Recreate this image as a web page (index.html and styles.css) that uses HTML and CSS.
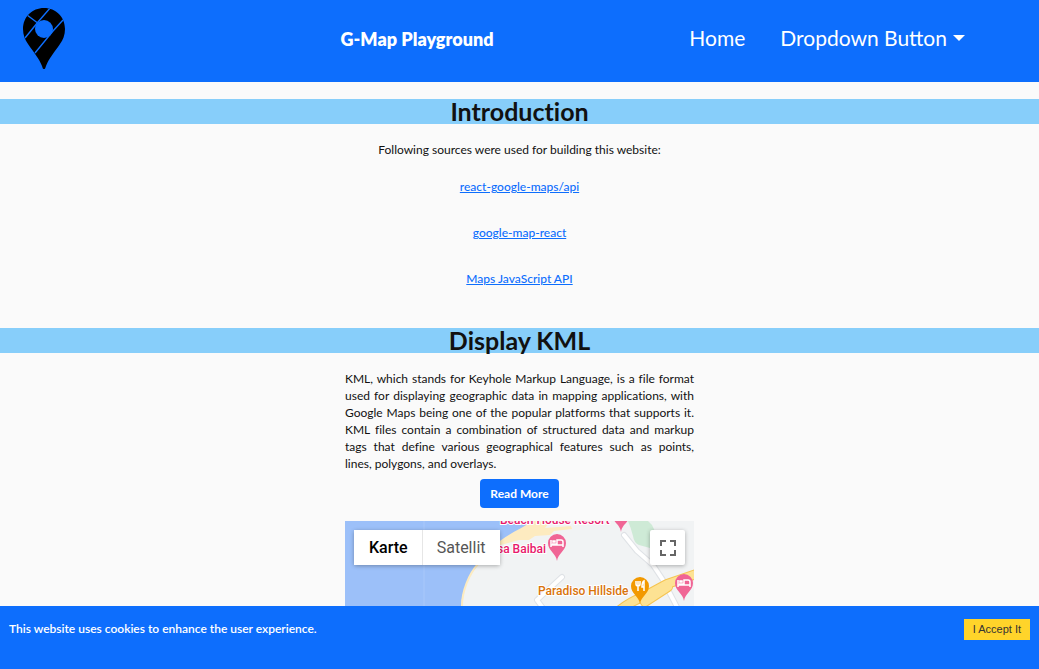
FILE: index.html
```html
<!DOCTYPE html>
<html lang="en">
<head>
<meta charset="utf-8">
<meta name="viewport" content="width=device-width, initial-scale=1">
<title>G-Map Playground</title>
<link rel="stylesheet" href="styles.css">
</head>
<body>
<header class="header">
  <a class="logo" href="#" aria-label="G-Map Playground">
    <svg width="44" height="63" viewBox="0 0 44 63" aria-hidden="true">
      <defs><clipPath id="pin"><path d="M22 1C10 1 1 10 1 22c0 6 2 11 5 15 6 9 11 14 14 22 1 3 1 3 2 3s1 0 2-3c3-8 8-13 14-22 3-4 5-9 5-15C43 10 34 1 22 1Z"/></clipPath></defs>
      <g clip-path="url(#pin)">
        <path d="M0 0H44V63H0Z"/>
        <path class="logo-line" d="M29 0 16 15 3 31M5 8 17 17M41 13 31 24 13 46"/>
        <circle class="logo-hole" cx="22" cy="22" r="9"/>
      </g>
    </svg>
  </a>
  <h1 class="title">G-Map Playground</h1>
  <nav class="nav">
    <a class="nav-item" href="#">Home</a>
    <button class="nav-item nav-toggle" type="button" aria-haspopup="true">Dropdown Button<span class="caret"></span></button>
  </nav>
</header>
<main class="main">
  <section>
    <h2 class="heading">Introduction</h2>
    <div class="sources">
      <p class="text">Following sources were used for building this website:</p>
      <ul class="links">
        <li><a href="#">react-google-maps/api</a></li>
        <li><a href="#">google-map-react</a></li>
        <li><a href="#">Maps JavaScript API</a></li>
      </ul>
    </div>
  </section>
  <section>
    <h2 class="heading">Display KML</h2>
    <div class="article">
      <p class="text justified">KML, which stands for Keyhole Markup Language, is a file format used for displaying geographic data in mapping applications, with Google Maps being one of the popular platforms that supports it. KML files contain a combination of structured data and markup tags that define various geographical features such as points, lines,&nbsp;polygons, and overlays.</p>
      <button class="read-more" type="button">Read More</button>
      <div class="map">
        <svg class="map-canvas" viewBox="0 0 349 200" preserveAspectRatio="xMidYMin slice" role="img" aria-label="Map">
          <defs>
            <path id="marker" d="M0 17C-1 9-9 7-9-1a9 9 0 0 1 18 0C9 7 1 9 0 17Z"/>
            <path id="bed" d="M-6-4V3M-6 1H6V3M6 1V-2Q6-4 4-4H0V0H-5M-4-3h2v1h-2z"/>
          </defs>
          <path class="land" d="M116 200V85C117 70 124 51 139 38 150 28 160 17 178 13 192 9 202 5 206 0H349V200Z"/>
          <path class="coast" d="M117 85C117 70 124 53 133 43"/>
          <path class="sand" d="M148 26C160 14 174 9 188 0H206L200 7 226 5 227 8 209 10 205 14 190 15 184 19 174 19Z"/>
          <path class="park" d="M283 0Q286 7 288 15 289 22 294 24L305 27H318L307 4 303 0Z"/>
          <path class="road-edge" d="M279 14 292 30 308 44 318 59 334 90M217 56 192 79 200 90"/>
          <path class="road" d="M279 14 292 30 308 44 318 59 334 90M217 56 192 79 200 90"/>
          <path class="highway-edge" d="M270 93Q284 81 298 76L322 63 354 52M300 81 323 66"/>
          <path class="highway" d="M270 93Q284 81 298 76L322 63 354 52M300 81 323 66"/>
          <path class="tile-line" d="M79 0V100"/>
          <text class="place hotel" x="155" y="3">Beach House Resort</text>
          <text class="place hotel" x="201" y="32" text-anchor="end">sa Baibai</text>
          <text class="place food" x="193" y="74">Paradiso Hillside</text>
          <g transform="translate(276 -6)"><use class="pin-hotel" href="#marker"/></g>
          <g transform="translate(212 23)"><use class="pin-hotel" href="#marker"/><use class="bed" href="#bed"/></g>
          <g transform="translate(339 63)"><use class="pin-hotel" href="#marker"/><use class="bed" href="#bed"/></g>
          <g transform="translate(295 66)"><use class="pin-food" href="#marker"/><path class="cutlery" d="M-4-6V-3Q-4-1-2-1T0-3V-6M-2-6V4M4 4V-6Q2-5 2 0H4"/></g>
        </svg>
        <div class="map-types">
          <button class="map-type active" type="button">Karte</button>
          <button class="map-type" type="button">Satellit</button>
        </div>
        <button class="fullscreen" type="button" aria-label="Fullscreen">
          <svg width="18" height="18" viewBox="0 0 18 18" aria-hidden="true"><path d="M2 7V2H7M11 2H16V7M16 11V16H11M7 16H2V11"/></svg>
        </button>
      </div>
    </div>
  </section>
</main>
<footer class="cookies">
  <p class="cookie-text">This website uses cookies to enhance the user experience.</p>
  <button class="accept" type="button">I Accept It</button>
</footer>
</body>
</html>
```
FILE: styles.css
```css
* { box-sizing: border-box; }

body {
  margin: 0;
  height: 100vh;
  display: flex;
  flex-direction: column;
  background: #fafafa;
  color: #111;
  font-family: Lato, sans-serif;
  font-size: 12px;
  font-variant-ligatures: none;
}

h1, h2, p, ul { margin: 0; }
button { font-family: inherit; cursor: pointer; }

.header {
  flex: none;
  display: grid;
  grid-template-columns: calc(34% - 2px) 1fr auto;
  align-items: center;
  height: 82px;
  padding: 0 74px 6px 22px;
  background: #0d6efd;
  color: #fff;
}
.logo { display: flex; }
.logo-line { fill: none; stroke: #0d6efd; stroke-width: 1.4; }
.logo-hole { fill: #0d6efd; }
.title { padding-top: 2px; font-size: 18px; line-height: 26px; font-weight: 800; white-space: nowrap; }
.nav { display: flex; justify-content: flex-end; align-items: center; gap: 35px; }
.nav-item {
  padding: 0;
  border: 0;
  background: none;
  color: #fff;
  font-size: 21px;
  line-height: 28px;
  text-decoration: none;
  white-space: nowrap;
}
.nav-toggle { display: flex; align-items: center; gap: 6px; }
.caret { border: 6px solid transparent; border-top-color: #fff; border-bottom: 0; }

.main { flex: 1; min-height: 0; overflow: hidden; padding-top: 17px; }
.heading {
  background: #87cefa;
  font-size: 25px;
  line-height: 25px;
  font-weight: 700;
  text-align: center;
}
.text { line-height: 17px; }
.sources { padding: 17px 0 41px; text-align: center; }
.links {
  display: flex;
  flex-direction: column;
  gap: 29px;
  padding: 20px 0 0;
  list-style: none;
  line-height: 17px;
}
.links a { color: #0d6efd; font-weight: 500; }

.article {
  display: flex;
  flex-direction: column;
  align-items: center;
  width: 349px;
  max-width: 100%;
  margin: 0 auto;
  padding-top: 17px;
}
.justified { text-align: justify; }
.read-more {
  margin: 7px 0 13px;
  padding: 6px 10px;
  border: 0;
  border-radius: 4px;
  background: #0d6efd;
  color: #fff;
  font-size: 12px;
  line-height: 17px;
  font-weight: 700;
}

.map { position: relative; width: 100%; height: 200px; background: #9cc0f9; font-family: Roboto, sans-serif; }
.map-canvas { display: block; width: 100%; height: 100%; }
.land { fill: #f1f3f4; }
.coast { fill: none; stroke: #fdebc0; stroke-width: 2; }
.sand { fill: #fdebc0; }
.park { fill: #ceead6; }
.road, .road-edge, .highway, .highway-edge { fill: none; stroke-linejoin: round; stroke-linecap: round; }
.road-edge { stroke: #dfe2e6; stroke-width: 6; }
.road { stroke: #fff; stroke-width: 4; }
.highway-edge { stroke: #f5c451; stroke-width: 10; }
.highway { stroke: #fde293; stroke-width: 8; }
.tile-line { stroke: #a9c8fa; }
.place { font-size: 12px; font-weight: 500; stroke: #fff; stroke-width: 2; paint-order: stroke; }
.hotel { fill: #e8196b; }
.food { fill: #d9730b; }
.pin-hotel { fill: #f06595; }
.pin-food { fill: #f29900; }
.bed, .cutlery { fill: none; stroke: #fff; stroke-width: 1.5; }

.map-types {
  position: absolute;
  top: 9px;
  left: 9px;
  display: flex;
  border-radius: 2px;
  box-shadow: 0 1px 4px rgba(0, 0, 0, .3);
}
.map-type {
  padding: 0 14px;
  border: 0;
  background: #fff;
  color: #565656;
  font-size: 16px;
  line-height: 35px;
}
.map-type + .map-type { border-left: 1px solid #e6e6e6; }
.map-type.active { padding-left: 15px; color: #000; font-weight: 500; }
.fullscreen {
  position: absolute;
  top: 9px;
  right: 9px;
  display: grid;
  place-items: center;
  width: 35px;
  height: 35px;
  padding: 0;
  border: 0;
  border-radius: 2px;
  background: #fff;
  box-shadow: 0 1px 4px rgba(0, 0, 0, .3);
}
.fullscreen path { fill: none; stroke: #666; stroke-width: 2; }

.cookies {
  flex: none;
  display: flex;
  justify-content: space-between;
  align-items: flex-start;
  padding: 13px 9px 29px;
  background: #0d6efd;
  color: #fff;
}
.cookie-text { line-height: 19px; font-weight: 600; }
.accept {
  padding: 0 9px;
  border: 0;
  background: #ffd42a;
  color: #333;
  font-family: "Liberation Sans", Arial, sans-serif;
  font-size: 11px;
  line-height: 21px;
}
```
